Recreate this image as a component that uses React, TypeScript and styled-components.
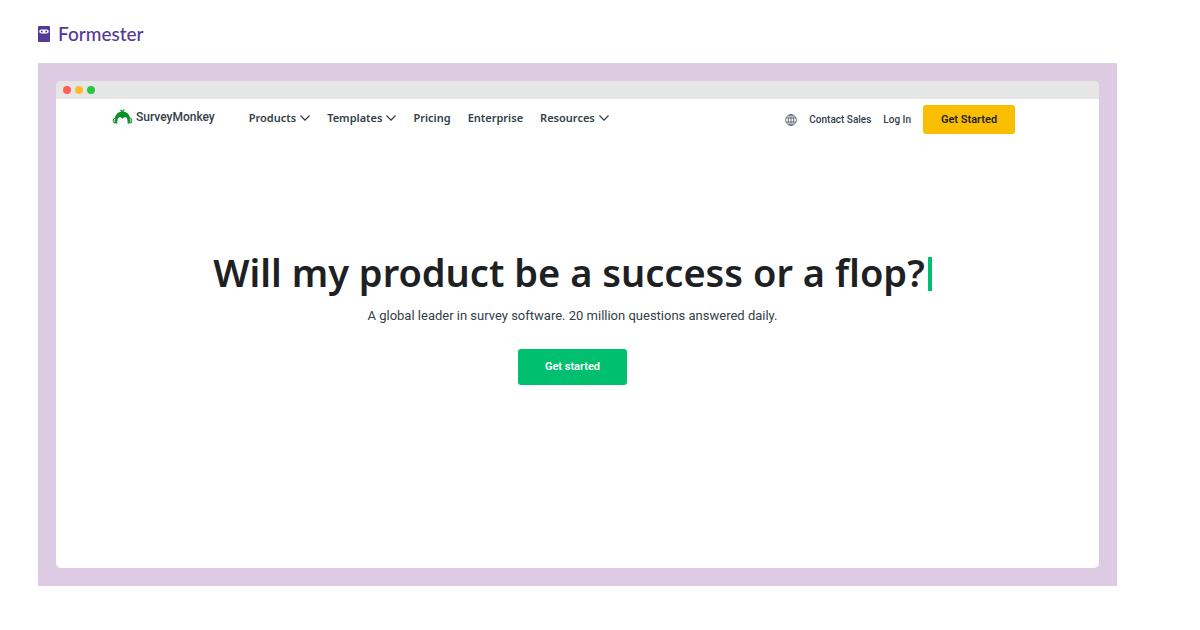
import React from "react";
import styled, { createGlobalStyle } from "styled-components";

const GlobalStyle = createGlobalStyle`
  * { box-sizing: border-box; }
  body { margin: 0; background: #ffffff; font-family: "Noto Sans", sans-serif; }
  button { font-family: inherit; cursor: pointer; }
`;

const Page = styled.div`
  padding: 24px 83px 44px 38px;
`;

const Brand = styled.a`
  display: flex;
  align-items: center;
  gap: 8px;
  height: 20px;
  color: #523a96;
  font: 500 19px/20px Lato, sans-serif;
  text-decoration: none;
`;

const Backdrop = styled.main`
  margin-top: 19px;
  padding: 18px;
  background: #dccbe3;
`;

const BrowserWindow = styled.section`
  border-radius: 5px;
  overflow: hidden;
  background: #ffffff;
`;

const TitleBar = styled.div`
  display: flex;
  align-items: center;
  gap: 4px;
  height: 18px;
  padding: 0 7px;
  background: #e6e6e6;
`;

const Dot = styled.span<{ $color: string }>`
  width: 8px;
  height: 8px;
  border-radius: 50%;
  background: ${(p) => p.$color};
`;

const Header = styled.header`
  display: flex;
  align-items: center;
  padding: 6px 84px 0 56px;
`;

const SiteLogo = styled.a`
  display: flex;
  align-items: center;
  gap: 3px;
  height: 22px;
  margin-bottom: 6px;
  color: #333e48;
  font: 500 12px/22px Roboto, sans-serif;
  text-decoration: none;
`;

const Nav = styled.nav`
  display: flex;
  gap: 17px;
  margin: 0 auto 3px 34px;
`;

const NavItem = styled.a`
  display: flex;
  align-items: center;
  gap: 4px;
  color: #333e48;
  font-size: 11px;
  font-weight: 600;
  line-height: 16px;
  text-decoration: none;
`;

const Account = styled.div`
  display: flex;
  align-items: center;
  gap: 12px;
`;

const AccountLink = styled.a`
  color: #333e48;
  font: 500 10px/16px Roboto, sans-serif;
  text-decoration: none;
`;

const Action = styled.button<{ $primary?: boolean }>`
  width: ${(p) => (p.$primary ? 109 : 92)}px;
  height: ${(p) => (p.$primary ? 36 : 29)}px;
  padding: 0;
  border: 0;
  border-radius: 3px;
  background: ${(p) => (p.$primary ? "#00bf6f" : "#f9be00")};
  color: ${(p) => (p.$primary ? "#ffffff" : "#1e2124")};
  font: 600 11px/16px Roboto, sans-serif;
`;

const Hero = styled.div`
  display: flex;
  flex-direction: column;
  align-items: center;
  min-height: 434px;
  padding: 110px 10px 0 0;
  text-align: center;
`;

const Title = styled.h1`
  display: flex;
  align-items: center;
  gap: 3px;
  margin: 0;
  color: #1e2124;
  font-size: 38px;
  font-weight: 600;
  line-height: 56px;
`;

const Caret = styled.span`
  width: 4px;
  height: 34px;
  margin-top: 4px;
  background: #00bf6f;
`;

const Lead = styled.p`
  margin: 6px 0 23px;
  color: #333e48;
  font: 400 13px/20px Roboto, sans-serif;
`;

const Chevron = () => (
  <svg width="10" height="6" viewBox="0 0 10 6" fill="none" stroke="#333e48" strokeWidth="1.2" aria-hidden="true">
    <path d="M.5.5 5 5.2 9.5.5" />
  </svg>
);

const FormesterMark = () => (
  <svg width="12" height="16" viewBox="0 0 12 16" aria-hidden="true">
    <rect width="12" height="16" rx="1" fill="#523a96" />
    <rect x="1.3" y="3.6" width="9.4" height="4" rx="2" fill="#fff" />
    <circle cx="3.8" cy="5.6" r="1" fill="#523a96" />
    <circle cx="8.2" cy="5.6" r="1" fill="#523a96" />
  </svg>
);

const MonkeyMark = () => (
  <svg width="21" height="16" viewBox="0 0 21 16" fill="#0b8f28" aria-hidden="true">
    <path d="M10.7 3.3C10 2 9.4 1.5 8.3 1.2M10.8 3.3C10.9 1.9 11.3 1 12.3.5" fill="none" stroke="#0b8f28" strokeWidth="1.2" />
    <path d="M3 8.700C3.800 5 6.700 2.500 10.500 2.500S17.200 5 18 8.700a3 3 0 0 1-.2 5.900h-2.200c.1-3.200-.1-6.100-2.300-6.300-1.200-.1-2 .5-2.800 1.500-.8-1-1.600-1.600-2.800-1.500-2.200.2-2.400 3.100-2.300 6.300H3.200A3 3 0 0 1 3 8.700Z" />
    <path d="M3.300 10.300a1.300 1.300 0 0 0 0 2.600M17.700 10.300a1.300 1.300 0 0 1 0 2.600" fill="none" stroke="#fff" strokeWidth=".9" />
  </svg>
);

const Globe = () => (
  <svg width="12" height="12" viewBox="0 0 12 12" fill="none" stroke="#5b626a" strokeWidth=".9" role="img" aria-label="Language">
    <circle cx="6" cy="6" r="5.4" />
    <ellipse cx="6" cy="6" rx="2.6" ry="5.4" />
    <path d="M6 .6v10.8M1.2 4h9.6M1.2 8h9.6" />
  </svg>
);

const navItems = [
  { label: "Products", menu: true },
  { label: "Templates", menu: true },
  { label: "Pricing", menu: false },
  { label: "Enterprise", menu: false },
  { label: "Resources", menu: true },
];

export default function App() {
  return (
    <Page>
      <GlobalStyle />
      <Brand href="#">
        <FormesterMark />
        Formester
      </Brand>
      <Backdrop>
        <BrowserWindow>
          <TitleBar>
            <Dot $color="#ff5f57" />
            <Dot $color="#febc2e" />
            <Dot $color="#28c840" />
          </TitleBar>
          <Header>
            <SiteLogo href="#">
              <MonkeyMark />
              SurveyMonkey
            </SiteLogo>
            <Nav>
              {navItems.map((item) => (
                <NavItem href="#" key={item.label}>
                  {item.label}
                  {item.menu && <Chevron />}
                </NavItem>
              ))}
            </Nav>
            <Account>
              <Globe />
              <AccountLink href="#">Contact Sales</AccountLink>
              <AccountLink href="#">Log In</AccountLink>
              <Action>Get Started</Action>
            </Account>
          </Header>
          <Hero>
            <Title>
              Will my product be a success or a flop?
              <Caret />
            </Title>
            <Lead>A global leader in survey software. 20 million questions answered daily.</Lead>
            <Action $primary>Get started</Action>
          </Hero>
        </BrowserWindow>
      </Backdrop>
    </Page>
  );
}
